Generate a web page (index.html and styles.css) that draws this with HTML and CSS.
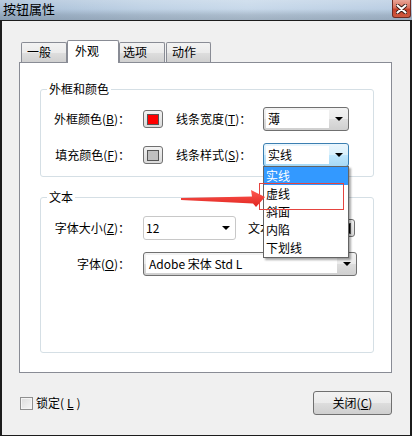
FILE: index.html
```html
<!DOCTYPE html>
<html lang="zh-CN">
<head>
<meta charset="utf-8">
<title>按钮属性</title>
<link rel="stylesheet" href="styles.css">
</head>
<body>
<div class="window">
  <div class="titlebar">
    <span class="title">按钮属性</span>
    <span class="close">
      <svg width="11" height="10" viewBox="0 0 11 10"><path d="M1.5 1.5 L9.5 8.5 M9.5 1.5 L1.5 8.5" stroke="#3a1a14" stroke-width="4" stroke-linecap="round"/><path d="M1.5 1.5 L9.5 8.5 M9.5 1.5 L1.5 8.5" stroke="#fff" stroke-width="2.2" stroke-linecap="round"/></svg>
    </span>
  </div>
  <div class="frame">
    <div class="tabs">
      <div class="tab t1">一般</div>
      <div class="tab t2 active">外观</div>
      <div class="tab t3">选项</div>
      <div class="tab t4">动作</div>
    </div>
    <div class="panel">
      <section class="group g1">
        <div class="legend">外框和颜色</div>
        <div class="grid">
          <span class="lbl">外框颜色(<u>B</u>)：</span>
          <span class="swatch"><i class="red"></i></span>
          <span class="lbl2">线条宽度(<u>T</u>)：</span>
          <div class="select"><span class="val">薄</span><span class="btn"><b class="tri"></b></span></div>

          <span class="lbl">填充颜色(<u>F</u>)：</span>
          <span class="swatch"><i class="gray"></i></span>
          <span class="lbl2">线条样式(<u>S</u>)：</span>
          <div class="select focus"><span class="val">实线</span><span class="btn"><b class="tri"></b></span>
            <ul class="list">
              <li class="sel">实线</li>
              <li>虚线</li>
              <li>斜面</li>
              <li>内陷</li>
              <li>下划线</li>
            </ul>
          </div>
        </div>
      </section>
      <section class="group g2">
        <div class="legend">文本</div>
        <div class="row">
          <span class="lbl">字体大小(<u>Z</u>)：</span>
          <div class="combo"><span class="val">12</span><span class="arrow"><b class="tri"></b></span></div>
          <span class="lbl3">文本颜色(<u>C</u>)：</span>
          <span class="swatch"><i class="black"></i></span>
        </div>
        <div class="row">
          <span class="lbl">字体(<u>O</u>)：</span>
          <div class="select wide"><span class="val">Adobe 宋体 Std L</span><span class="btn"><b class="tri"></b></span></div>
        </div>
      </section>
    </div>
    <div class="footer">
      <label class="check"><span class="box"></span>锁定(<u>L</u>)</label>
      <span class="button">关闭(<u>C</u>)</span>
    </div>
  </div>
  <div class="mark"></div>
  <svg class="arrow-note" width="92" height="26" viewBox="176 186 92 26">
    <defs>
      <linearGradient id="ag" x1="0" y1="0" x2="0" y2="1">
        <stop offset="0" stop-color="#ff5a52"/>
        <stop offset="1" stop-color="#e0241f"/>
      </linearGradient>
    </defs>
    <polygon points="181,198 252,196.5 251,190 265,197 256,207 253,203.5 181,200" fill="url(#ag)"/>
  </svg>
</div>
</body>
</html>
```
FILE: styles.css
```css
* { box-sizing: border-box; }
body {
  margin: 0;
  width: 412px;
  height: 437px;
  overflow: hidden;
  background: #fff;
  font-family: "Noto Sans CJK SC", "Noto Sans", sans-serif;
  font-size: 12px;
  line-height: 16px;
  color: #000;
}
u { text-decoration: underline; text-underline-offset: 1px; }
.window { position: relative; width: 412px; height: 437px; }

.titlebar {
  height: 20px;
  display: flex;
  justify-content: space-between;
  align-items: flex-start;
  background:
    linear-gradient(180deg, rgba(255,255,255,0.18) 0%, rgba(255,255,255,0) 45%, rgba(70,85,100,0.22) 75%, rgba(70,85,100,0.30) 100%),
    linear-gradient(90deg, #a8bed6 0%, #bfd2e5 35%, #c8d9ea 60%, #b9cde2 100%);
}
.title { font-size: 13px; line-height: 18px; padding-left: 3px; color: #000; }
.close {
  width: 19px;
  height: 18px;
  margin-right: 1px;
  display: flex;
  align-items: center;
  justify-content: center;
  border: 1px solid #6e2a22;
  border-top: none;
  border-radius: 0 0 3px 3px;
  background: linear-gradient(180deg, #e9a597 0%, #d8705d 45%, #c4402b 55%, #cf5a40 100%);
}

.frame {
  height: 416px;
  border: 1px solid #1c1c1c;
  border-left-width: 2px;
  border-right-width: 2px;
  background: #f0f0f0;
  padding-top: 19px;
}

.tabs {
  display: flex;
  align-items: flex-end;
  height: 22px;
  margin-left: 19px;
  position: relative;
  z-index: 1;
}
.tab {
  height: 20px;
  border: 1px solid #898c95;
  border-bottom: none;
  border-radius: 2px 2px 0 0;
  background: linear-gradient(180deg, #f3f3f3 0%, #ebebeb 50%, #dedede 52%, #d0d0d0 100%);
  padding-left: 5px;
  line-height: 18px;
  white-space: nowrap;
}
.t1 { width: 46px; }
.t2 { width: 52px; }
.t3 { width: 46px; padding-left: 3px; }
.t4 { width: 45px; margin-left: 1px; }
.tab.active {
  height: 23px;
  margin-bottom: -1px;
  background: #fff;
  padding-left: 7px;
  padding-top: 1px;
}

.panel {
  margin-left: 17px;
  width: 373px;
  height: 311px;
  border: 1px solid #898c95;
  background: #fff;
  padding: 26px 0 0 20px;
}

.group {
  width: 334px;
  border: 1px solid #d5dfe5;
  border-radius: 3px;
}
.legend {
  display: table;
  margin: -8px 0 0 6px;
  padding: 0 2px;
  background: #fff;
  line-height: 14px;
  font-size: 12px;
}
.g1 { height: 88px; }
.g1 .grid {
  display: grid;
  grid-template-columns: 89px 20px 74px 86px;
  grid-auto-rows: 24px;
  column-gap: 13px;
  row-gap: 12px;
  align-items: center;
  margin-top: 11px;
}
.lbl { text-align: right; white-space: nowrap; }
.lbl2, .lbl3 { white-space: nowrap; }

.g2 { margin-top: 20px; height: 156px; padding-top: 0; }
.row {
  display: flex;
  align-items: center;
  height: 24px;
  margin-top: 12px;
}
.row .lbl { width: 89px; margin-right: 13px; }
.lbl3 { margin-left: 12px; width: 87px; }

.swatch {
  width: 20px;
  height: 18px;
  border: 1px solid #707070;
  border-radius: 3px;
  background: linear-gradient(180deg, #f2f2f2, #dadada);
  display: flex;
  align-items: center;
  justify-content: center;
}
.swatch i {
  width: 12px;
  height: 11px;
  border: 1px solid #555;
}
.swatch .red { background: #ff0000; }
.swatch .gray { background: #c0c0c0; }
.swatch .black { background: #000; }

.select {
  position: relative;
  display: flex;
  height: 24px;
  border: 1px solid #707070;
  border-radius: 3px;
  background: linear-gradient(180deg, #f2f2f2 0%, #ebebeb 50%, #dddddd 51%, #cfcfcf 100%);
}
.select .val {
  flex: 1;
  margin: 2px 0 2px 2px;
  padding-left: 2px;
  background: #fff;
  line-height: 18px;
  white-space: nowrap;
}
.select .btn {
  width: 19px;
  display: flex;
  align-items: center;
  justify-content: center;
}
.select.focus {
  border-color: #3c7fb1;
  background: linear-gradient(180deg, #eaf6fd 0%, #d9f0fc 50%, #bee6fd 51%, #a7d9f5 100%);
}
.select.wide { width: 214px; }
.select.wide .val { padding-left: 3px; }
.tri {
  width: 0;
  height: 0;
  border-left: 4px solid transparent;
  border-right: 4px solid transparent;
  border-top: 4px solid #000;
}

.list {
  position: absolute;
  top: 100%;
  left: -1px;
  width: 86px;
  margin: 0;
  padding: 0;
  list-style: none;
  background: #fff;
  border: 1px solid #646464;
  box-shadow: 2px 2px 2px rgba(0,0,0,0.35);
  z-index: 10;
}
.list li {
  height: 18px;
  line-height: 18px;
  padding-left: 2px;
}
.list li.sel { background: #3399ff; color: #fff; }

.combo {
  display: flex;
  align-items: center;
  width: 93px;
  height: 24px;
  border: 1px solid #c8c8c8;
  border-radius: 3px;
  background: #fff;
}
.combo .val { flex: 1; padding-left: 2px; }
.combo .arrow { width: 18px; display: flex; justify-content: center; }

.footer {
  display: flex;
  justify-content: space-between;
  align-items: center;
  margin: 18px 0 0 17px;
  width: 373px;
  height: 24px;
  padding-left: 1px;
}
.check { display: flex; align-items: center; gap: 3px; }
.box {
  width: 13px;
  height: 13px;
  border: 1px solid #8f8f8f;
  background: linear-gradient(135deg, #dcdcdc, #f6f6f6);
  box-shadow: inset 0 0 0 1px #f4f4f4;
}
.button {
  width: 79px;
  height: 24px;
  border: 1px solid #707070;
  border-radius: 3px;
  background: linear-gradient(180deg, #f2f2f2 0%, #ebebeb 50%, #dddddd 51%, #cfcfcf 100%);
  display: flex;
  align-items: center;
  justify-content: center;
}

.mark {
  position: absolute;
  left: 259px;
  top: 183px;
  width: 85px;
  height: 27px;
  border: 1px solid #e5443f;
  z-index: 20;
}
.arrow-note {
  position: absolute;
  left: 176px;
  top: 186px;
  z-index: 21;
}
```
